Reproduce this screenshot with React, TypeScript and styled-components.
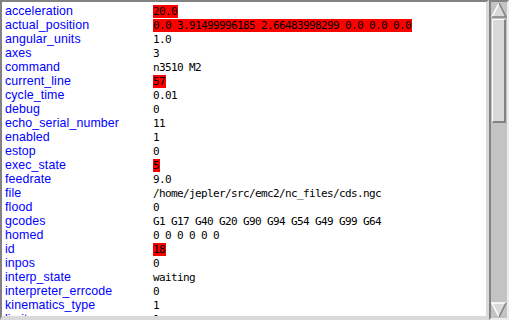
import styled, { createGlobalStyle } from "styled-components"

const GlobalStyle = createGlobalStyle`
  html, body {
    margin: 0;
    padding: 0;
    background: #d9d9d9;
  }
`

const Window = styled.div`
  width: 509px;
  height: 320px;
  display: flex;
  background: #d9d9d9;
  overflow: hidden;
`

const TextPane = styled.div`
  flex: 1;
  background: #ffffff;
  border-top: 2px solid #828282;
  border-left: 2px solid #828282;
  border-right: 3px solid #d9d9d9;
  border-bottom: 4px solid #d9d9d9;
  padding: 2px 0 0 3px;
  overflow: hidden;
`

const Row = styled.div`
  display: grid;
  grid-template-columns: 148px 1fr;
  height: 14px;
  align-items: center;
  white-space: nowrap;
`

const Key = styled.span`
  font-family: "Liberation Sans", Arial, sans-serif;
  font-size: 12.4px;
  letter-spacing: 0.1px;
  color: #0000ff;
  line-height: 14px;
`

const Value = styled.span<{ $hot?: boolean }>`
  justify-self: start;
  display: inline-block;
  font-family: "DejaVu Sans Mono", "Liberation Mono", monospace;
  font-size: 11px;
  letter-spacing: -0.62px;
  line-height: 13px;
  height: 13px;
  margin-top: 1px;
  padding-right: 0.62px;
  color: #000000;
  background: ${p => (p.$hot ? "#ff0000" : "transparent")};
`

const ScrollBar = styled.div`
  width: 16px;
  display: flex;
  flex-direction: column;
  background: #c3c3c3;
  border-left: 2px solid #828282;
  border-top: 2px solid #828282;
  border-right: 2px solid #ececec;
  border-bottom: 2px solid #ececec;
`

const Arrow = styled.svg`
  display: block;
  width: 16px;
  height: 16px;
  flex: none;
`

const Trough = styled.div`
  flex: 1;
  display: flex;
  flex-direction: column;
  padding: 1px 0;
`

const Thumb = styled.div<{ $size: number }>`
  height: ${p => p.$size}px;
  margin: 0 1px;
  background: #d9d9d9;
  border-top: 1px solid #ffffff;
  border-left: 1px solid #ffffff;
  border-right: 2px solid #828282;
  border-bottom: 2px solid #828282;
`

const Spacer = styled.div`
  flex: 1;
`

const rows: [string, string, boolean?][] = [
  ["acceleration", "20.0", true],
  ["actual_position", "0.0 3.91499996185 2.66483998299 0.0 0.0 0.0", true],
  ["angular_units", "1.0"],
  ["axes", "3"],
  ["command", "n3510 M2"],
  ["current_line", "57", true],
  ["cycle_time", "0.01"],
  ["debug", "0"],
  ["echo_serial_number", "11"],
  ["enabled", "1"],
  ["estop", "0"],
  ["exec_state", "5", true],
  ["feedrate", "9.0"],
  ["file", "/home/jepler/src/emc2/nc_files/cds.ngc"],
  ["flood", "0"],
  ["gcodes", "G1 G17 G40 G20 G90 G94 G54 G49 G99 G64"],
  ["homed", "0 0 0 0 0 0"],
  ["id", "18", true],
  ["inpos", "0"],
  ["interp_state", "waiting"],
  ["interpreter_errcode", "0"],
  ["kinematics_type", "1"],
  ["limit", " 1"],
]

const UpArrow = () => (
  <Arrow viewBox="0 0 16 16">
    <polygon points="8,1 1,15 15,15" fill="#d9d9d9" />
    <polyline points="1,15 8,1" fill="none" stroke="#ffffff" strokeWidth="1.5" />
    <polyline points="8,1 15,15 1,15" fill="none" stroke="#828282" strokeWidth="1.5" />
  </Arrow>
)

const DownArrow = () => (
  <Arrow viewBox="0 0 16 16">
    <polygon points="1,1 15,1 8,15" fill="#d9d9d9" />
    <polyline points="8,15 1,1 15,1" fill="none" stroke="#ffffff" strokeWidth="1.5" />
    <polyline points="15,1 8,15" fill="none" stroke="#828282" strokeWidth="1.5" />
  </Arrow>
)

export default function App() {
  return (
    <Window>
      <GlobalStyle />
      <TextPane>
        {rows.map(([k, v, hot]) => (
          <Row key={k}>
            <Key>{k}</Key>
            <Value $hot={hot}>{v}</Value>
          </Row>
        ))}
      </TextPane>
      <ScrollBar>
        <UpArrow />
        <Trough>
          <Thumb $size={101} />
          <Spacer />
        </Trough>
        <DownArrow />
      </ScrollBar>
    </Window>
  )
}
